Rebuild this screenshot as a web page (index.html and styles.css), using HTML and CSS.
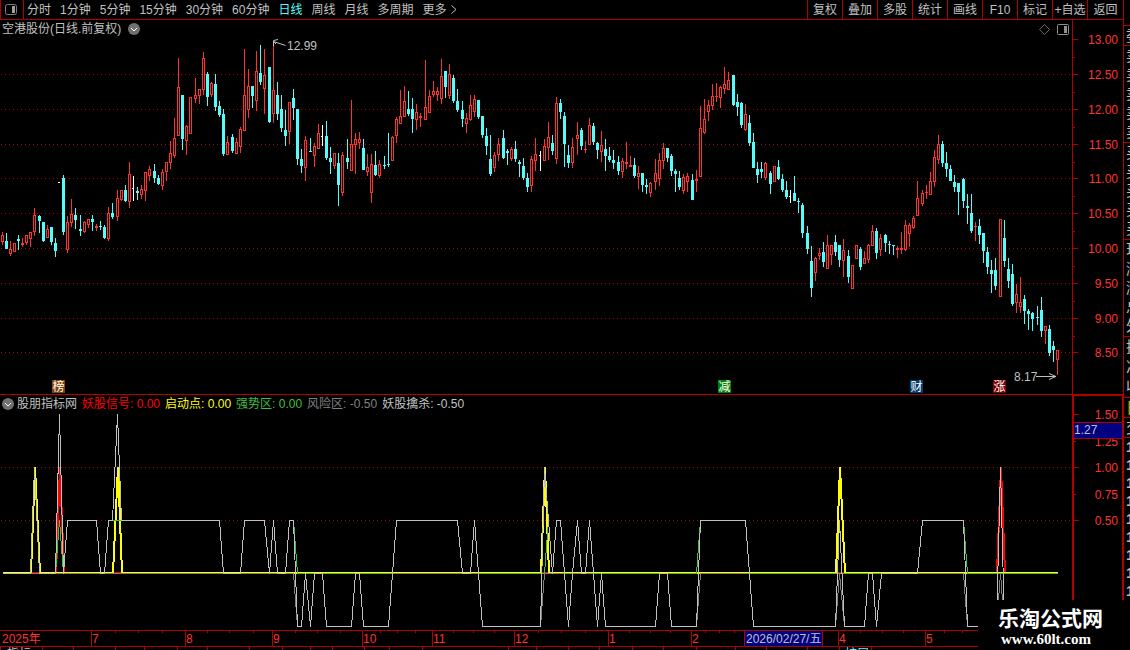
FILE: index.html
```html
<!DOCTYPE html>
<html lang="zh-CN">
<head>
  <meta charset="UTF-8">
  <meta name="viewport" content="width=device-width, initial-scale=1.0">
  <title>空港股份 日线</title>
  <link rel="stylesheet" href="styles.css">
</head>
<body>
  <div class="app">
    <div class="main">
      <!-- 工具栏 -->
      <nav class="toolbar">
        <button class="panel-toggle" aria-label="侧栏">
          <svg width="12" height="11" viewBox="0 0 12 11"><rect x="0.5" y="0.5" width="11" height="10" rx="2" fill="none" stroke="#808080"/><rect x="7" y="2" width="3" height="7" fill="#a0a0a0"/></svg>
        </button>
        <div class="periods">
          <button>分时</button>
          <button>1分钟</button>
          <button>5分钟</button>
          <button>15分钟</button>
          <button>30分钟</button>
          <button>60分钟</button>
          <button class="active">日线</button>
          <button>周线</button>
          <button>月线</button>
          <button>多周期</button>
          <button class="more">更多
            <svg width="6" height="9" viewBox="0 0 6 9"><path d="M0.5 0.5L5 4.5L0.5 8.5" fill="none" stroke="#c0c0c0"/></svg>
          </button>
        </div>
        <div class="actions">
          <button>复权</button>
          <button>叠加</button>
          <button>多股</button>
          <button>统计</button>
          <button>画线</button>
          <button>F10</button>
          <button>标记</button>
          <button>+自选</button>
          <button>返回</button>
        </div>
      </nav>

      <!-- K线图 -->
      <section class="panel price-panel">
        <div class="plot">
          <svg id="priceChart"></svg>
          <div class="plot-head">
            <span>空港股份(日线.前复权)</span>
            <svg width="12" height="12" viewBox="0 0 12 12"><circle cx="6" cy="6" r="6" fill="#707070"/><path d="M3 5L6 8L9 5" fill="none" stroke="#fff"/></svg>
            <div class="plot-tools">
              <svg width="11" height="11" viewBox="0 0 11 11"><path d="M5.5 0.5L10.5 5.5L5.5 10.5L0.5 5.5Z" fill="none" stroke="#808080" stroke-width="0.8"/></svg>
              <svg width="12" height="11" viewBox="0 0 12 11"><rect x="0.5" y="0.5" width="11" height="10" rx="1" fill="none" stroke="#909090"/><rect x="7" y="2" width="3" height="7" fill="#909090"/></svg>
            </div>
          </div>
        </div>
        <svg class="axis" id="priceAxis"></svg>
      </section>

      <!-- 指标 -->
      <section class="panel index-panel">
        <div class="plot">
          <svg id="indexChart"></svg>
          <div class="plot-head">
            <svg width="12" height="12" viewBox="0 0 12 12"><circle cx="6" cy="6" r="6" fill="#707070"/><path d="M3 5L6 8L9 5" fill="none" stroke="#fff"/></svg>
            <span class="index-name">股朋指标网</span>
            <span class="red">妖股信号: 0.00</span>
            <span class="yellow">启动点: 0.00</span>
            <span class="green">强势区: 0.00</span>
            <span class="gray">风险区: -0.50</span>
            <span>妖股擒杀: -0.50</span>
          </div>
        </div>
        <svg class="axis" id="indexAxis"></svg>
      </section>

      <svg class="timeline" id="timeline"></svg>
      <div class="footer">
        <svg id="footTicks"></svg>
        <div class="foot-text"><span>指标</span><span class="cyan">扩展</span></div>
      </div>
    </div>

    <!-- 右侧盘口 -->
    <aside class="side">
      <div class="cells one"><span>委</span></div>
      <div class="cells five"><span>卖</span><span>卖</span><span>卖</span><span>卖</span><span>卖</span></div>
      <div class="cells five"><span>买</span><span>买</span><span>买</span><span>买</span><span>买</span></div>
      <div class="cells five"><span>现</span><span>涨</span><span>涨</span><span>总</span><span>外</span></div>
      <div class="cells three"><span>换</span><span>净</span><span>收</span></div>
      <div class="cells one tab"><span>日</span></div>
      <div class="cells one"><span>交</span></div>
      <div class="cells ticks"><span>1</span><span>1</span><span>1</span><span>1</span><span>1</span><span>1</span><span>1</span><span>1</span><span>1</span></div>
    </aside>

    <div class="watermark">
      <strong>乐淘公式网</strong>
      <b>www.60lt.com</b>
    </div>
  </div>

  <script src="chart.js"></script>
</body>
</html>
```

FILE: styles.css
```css
body {
  margin: 0;
  background-color: #000;
  color: #c0c0c0;
  font-family: "Liberation Sans", "Noto Sans CJK SC", sans-serif;
  font-size: 12px;
  overflow: hidden;
}
.app {
  position: relative;
  display: flex;
  height: 100vh;
}
.main {
  flex: 1;
  min-width: 0;
  display: flex;
  flex-direction: column;
}
svg {
  display: block;
}
button {
  padding: 0;
  border: none;
  background: none;
  color: #c0c0c0;
  font: inherit;
  line-height: 18px;
  white-space: nowrap;
  cursor: pointer;
}

/* 工具栏 */
.toolbar {
  display: flex;
  height: 19px;
  border-bottom: 1px solid #b00000;
}
.panel-toggle {
  width: 24px;
  padding-left: 4px;
  border-left: 1px solid #b00000;
  border-right: 1px solid #b00000;
}
.periods {
  display: flex;
  flex: 1;
  gap: 9px;
  padding-left: 3px;
}
.periods .active {
  color: #54fcfc;
}
.more {
  display: flex;
  align-items: center;
  gap: 4px;
}
.actions {
  display: flex;
}
.actions button {
  width: 35px;
  border-left: 1px solid #b00000;
}
.actions button:last-child {
  width: 36px;
}

/* 图表 */
.panel {
  display: flex;
}
.price-panel {
  height: 374px;
  border-bottom: 1px solid #b00000;
}
.index-panel {
  height: 235px;
}
.plot {
  flex: 1;
  min-width: 0;
  display: grid;
}
.plot > * {
  grid-area: 1 / 1;
}
.plot > svg {
  width: 100%;
  height: 100%;
}
.plot-head {
  display: flex;
  align-self: start;
  align-items: center;
  gap: 5px;
  height: 18px;
  padding: 0 3px 0 2px;
  line-height: 18px;
  white-space: nowrap;
}
.price-panel .plot-head {
  gap: 7px;
}
.plot-tools {
  display: flex;
  gap: 7px;
  margin-left: auto;
}
.axis {
  box-sizing: border-box;
  width: 51px;
  height: 100%;
  border-left: 1px solid #b00000;
}
.index-panel .axis {
  border: solid #b00000;
  border-width: 1px 1px 0 2px;
}
.timeline {
  box-sizing: border-box;
  width: 100%;
  height: 17px;
  border-top: 1px solid #b00000;
  border-bottom: 1px solid #b00000;
}
.footer {
  display: grid;
  height: 3px;
  overflow: hidden;
}
.footer > * {
  grid-area: 1 / 1;
  width: 100%;
}
.foot-text {
  display: flex;
  justify-content: space-between;
  box-sizing: border-box;
  padding: 0 254px 0 7px;
  line-height: 14px;
}
.red { color: #ff0000; }
.yellow { color: #ffff00; }
.green { color: #40c040; }
.gray { color: #808080; }
.cyan { color: #54fcfc; }
.index-panel .plot-head svg {
  margin-right: -2px;
}

/* svg 文字和线 */
text {
  font-family: "Liberation Sans", "Noto Sans CJK SC", sans-serif;
  font-size: 12px;
  fill: #c0c0c0;
}
.scale {
  fill: #ff3232;
}
.tag {
  fill: #fff;
}
.line {
  fill: none;
  shape-rendering: crispEdges;
}

/* 盘口 */
.side {
  width: 6px;
  padding-top: 25px;
  border-left: 1px solid #b00000;
  overflow: hidden;
  font-size: 15px;
}
.cells {
  display: grid;
  box-sizing: border-box;
  grid-auto-rows: 1fr;
  align-items: center;
  padding-left: 2px;
  border-top: 1px solid #b00000;
  line-height: 18px;
}
.one { height: 20px; }
.five { height: 97px; }
.three { height: 61px; }
.ticks {
  height: 163px;
  font-weight: bold;
}
.tab {
  color: #c0c000;
}

.watermark {
  position: absolute;
  right: 0;
  bottom: 0;
  box-sizing: border-box;
  width: 152px;
  height: 50px;
  padding: 8px 0 0 20px;
  background-color: #000;
  color: #fff;
}
.watermark strong {
  display: block;
  font-size: 21px;
  line-height: 22px;
}
.watermark b {
  display: block;
  padding-left: 3px;
  font-family: "Liberation Serif", serif;
  font-size: 15px;
  line-height: 18px;
}
```

FILE: chart.js
```js
const RED = '#ff3232';
const CYAN = '#54fcfc';
const LINE = '#b00000';

// 每根K线: 上影 实体上 实体下 下影 颜色 (r 涨, c 跌, w 平)
const candles = `
232 235 242 245 r,233 241 249 249 c,241 249 254 256 r,243 243 252 252 r,235 239 241 250 c,238 243 245 247 r,
235 235 243 245 r,232 232 239 247 r,208 215 232 236 r,215 216 221 233 c,222 222 241 242 c,225 229 238 238 r,
227 227 242 245 c,238 243 251 257 c,182 182 183 183 w,175 178 232 235 c,216 222 250 253 r,199 214 223 227 r,
208 215 220 229 c,215 229 231 236 c,221 222 232 233 r,219 219 225 228 r,215 219 222 231 c,224 226 228 231 r,
221 226 227 230 c,225 227 238 239 c,207 213 239 241 r,203 213 217 219 c,190 198 217 221 r,190 190 200 201 r,
185 190 201 202 c,162 174 202 208 r,176 188 189 201 w,187 191 193 200 c,185 189 195 199 r,172 172 191 201 r,
166 169 176 181 r,164 171 178 183 c,175 178 184 185 c,169 172 186 190 r,162 162 172 181 r,141 153 163 169 r,
118 138 156 158 r,58 87 136 136 r,95 95 139 150 c,125 126 141 155 r,97 97 134 134 r,78 95 99 103 r,
89 89 96 104 r,52 58 90 95 r,72 74 97 106 c,82 83 95 97 r,74 84 107 111 c,101 106 115 117 c,
109 114 154 156 c,136 142 155 155 r,134 137 151 153 c,138 142 154 154 r,127 129 147 153 r,49 95 131 131 r,
69 86 110 118 r,86 86 96 108 c,51 71 101 111 r,45 73 82 85 c,49 75 89 114 r,67 67 122 123 c,
42 90 114 123 r,82 95 114 120 c,95 109 128 132 c,110 130 136 146 c,102 102 132 144 r,89 98 108 120 c,
109 109 159 165 c,149 159 166 173 c,136 140 168 181 r,138 151 152 152 c,143 146 156 167 r,124 133 149 149 r,
125 136 137 146 w,121 136 158 160 c,147 158 162 174 c,153 153 166 169 r,153 163 185 206 c,152 155 193 196 r,
139 158 162 169 c,100 144 171 171 r,133 139 145 174 r,132 139 143 149 r,139 148 170 170 c,154 167 172 176 r,
154 164 193 203 r,151 165 175 176 c,160 164 176 178 r,156 165 166 169 c,133 164 165 167 c,136 137 161 161 r,
117 119 136 143 r,90 116 124 124 r,86 101 117 117 r,91 109 114 116 c,98 109 119 133 c,104 112 120 130 r,
113 116 118 127 r,60 107 120 120 r,90 96 113 113 r,81 91 95 97 r,87 91 95 101 r,59 76 99 104 r,
71 71 87 98 c,64 74 96 99 r,75 78 101 103 c,89 101 110 112 c,101 110 119 127 c,113 118 124 133 r,
95 105 120 121 r,95 99 112 117 r,100 100 117 119 c,116 116 135 138 c,128 136 146 155 c,135 159 174 176 c,
152 155 168 172 r,138 144 155 161 r,130 138 158 159 c,149 151 153 165 c,147 149 159 161 r,141 149 159 162 c,
160 162 164 177 c,158 166 178 180 c,173 178 187 192 c,156 159 186 192 r,138 154 161 171 r,151 155 156 171 w,
139 146 161 161 r,122 137 148 160 r,135 143 151 155 c,97 103 159 164 r,99 103 112 119 c,112 116 144 167 c,
145 155 163 168 c,138 147 163 168 r,122 135 139 155 r,128 130 146 150 c,141 149 150 153 r,118 125 145 145 r,
123 126 142 145 c,142 143 150 159 c,131 145 152 162 r,139 149 156 171 c,147 156 160 162 c,150 160 163 169 c,
156 162 171 175 c,158 161 172 178 r,142 162 164 169 r,156 165 167 167 r,158 165 176 178 c,166 173 177 189 r,
173 173 185 192 c,179 185 187 194 c,182 183 193 197 r,159 173 182 190 r,153 160 179 186 r,143 148 161 169 r,
148 148 158 162 c,154 156 171 176 c,169 171 174 192 c,171 178 187 190 c,174 177 191 194 r,173 176 182 192 r,
174 180 200 200 c,170 179 181 192 r,106 128 177 177 r,99 119 133 134 r,100 105 112 121 r,84 96 106 110 r,
83 96 97 102 r,86 87 98 108 r,67 84 89 94 r,72 80 90 90 r,75 75 105 106 c,94 102 107 116 c,
102 103 125 128 c,104 114 130 131 r,115 123 143 146 c,133 142 168 168 c,162 169 175 183 c,162 169 172 178 c,
162 163 178 180 r,171 173 184 194 c,166 166 182 182 r,160 167 179 180 c,174 179 190 192 c,181 190 197 199 c,
190 196 197 203 w,176 193 201 201 c,198 201 202 213 c,203 205 233 238 c,226 233 249 254 c,246 261 288 297 c,
257 258 273 281 r,248 253 256 260 r,242 252 262 267 c,235 245 269 269 r,245 245 255 265 r,235 242 252 256 c,
245 245 260 267 c,239 250 261 277 r,250 256 277 283 c,265 265 289 289 r,245 245 259 259 r,247 249 267 270 c,
251 258 264 264 r,244 245 260 263 r,225 231 246 246 r,228 231 253 259 c,234 238 250 256 r,234 235 243 252 c,
241 244 245 254 c,245 245 246 255 c,246 248 250 258 r,232 248 250 254 r,220 225 250 251 r,223 225 234 247 r,
216 218 228 229 r,181 198 216 216 r,190 193 204 206 r,185 192 193 199 r,172 181 195 195 r,150 157 182 187 r,
135 144 160 164 r,141 144 163 167 c,152 163 169 177 c,165 169 181 181 c,175 182 187 192 c,183 183 192 215 c,
178 179 201 208 c,194 206 208 224 c,194 213 231 233 c,222 226 227 241 r,219 226 235 244 c,233 233 251 263 c,
247 252 267 274 c,260 270 274 293 c,258 270 286 290 c,219 219 297 297 r,220 238 261 267 c,258 269 281 288 c,
264 274 304 306 c,284 294 303 313 r,277 302 307 313 r,295 299 311 324 c,309 311 314 330 c,312 313 319 331 c,
306 317 318 325 c,297 310 331 337 c,326 326 331 344 r,325 329 353 356 c,341 346 350 362 c,350 350 360 375 r`
  .trim().split(',').map(row => row.trim().split(' '));

const rect = (x, y, w, h, fill) => `<rect x="${x}" y="${y}" width="${w}" height="${h}" fill="${fill}"/>`;
const text = (x, y, s, cls = '', anchor = 'start') => `<text x="${x}" y="${y}" class="${cls}" text-anchor="${anchor}">${s}</text>`;
const dots = y => `<line x1="1" x2="100%" y1="${y + 0.5}" y2="${y + 0.5}" stroke="${LINE}" stroke-dasharray="1 3"/>`;

// K线
const drawCandle = ([high, top, bottom, low, type], i) => {
  [high, top, bottom, low] = [high, top, bottom, low].map(Number);
  const x = Math.floor(2.05 + i * 4.107);
  if (type === 'w') {
    return rect(x, high, 1, low - high, '#fff') + rect(x - 1, top, 2, 1, '#fff');
  }
  const color = type === 'r' ? RED : CYAN;
  let out = rect(x, high, 1, low - high, color) + rect(x - 1, top, 3, bottom - top, color);
  if (type === 'r' && bottom - top > 2) {
    out += rect(x, top + 1, 1, bottom - top - 2, '#000');
  }
  return out;
};

const prices = [['13.00', 39], ['12.50', 74], ['12.00', 109], ['11.50', 144], ['11.00', 178], ['10.50', 213], ['10.00', 248], ['9.50', 283], ['9.00', 318], ['8.50', 352]];
const tags = [['榜', 52, '#804000'], ['减', 718, '#008000'], ['财', 910, '#003c70'], ['涨', 993, '#800000']];

document.getElementById('priceChart').innerHTML = `<g transform="translate(0,-20)">
  ${prices.slice(1).map(p => dots(p[1])).join('')}
  ${candles.map(drawCandle).join('')}
  <path d="M285.5 45.5L273.5 41.5M278 39.5L273.5 40.5V46M273.5 41.5L276 44" fill="none" stroke="#c0c0c0"/>
  ${text(287, 50, '12.99')}
  ${text(1014, 381, '8.17')}
  <path d="M1036 376.5H1056M1049 373.5L1056 376.5L1049 379.5" fill="none" stroke="#c0c0c0"/>
  ${tags.map(([s, x, bg]) => rect(x, 380, 13, 13, bg) + text(x + 0.5, 391, s, 'tag')).join('')}
</g>`;

document.getElementById('priceAxis').innerHTML = `<g transform="translate(0,-20)">
  ${prices.map(([s, y], i) => rect(0, y, 5, 1, LINE) + text(45, y + 5, s, 'scale', 'end') + (i < 9 ? rect(0, y + 18, 2, 1, LINE) : '')).join('')}
</g>`;

// 指标线, [x, 值]
const hunt = [[2, 0], [30, 0], [34, 1], [39, 0], [55, 0], [59, 1.5], [63, 0], [67, .5], [96, .5], [100, 0], [104, 0], [108, .5], [112, .5],
  [117, 1.5], [121, .5], [219, .5], [223, 0], [240, 0], [244, .5], [264, .5], [269, 0], [273, .5], [277, 0], [285, 0], [289, .5], [293, .5],
  [297, -.5], [301, -.5], [305, 0], [310, -.5], [314, 0], [322, 0], [326, -.5], [351, -.5], [355, 0], [359, 0], [363, -.5], [388, -.5],
  [392, 0], [396, .5], [457, .5], [462, 0], [470, 0], [474, .5], [478, 0], [482, -.5], [540, -.5], [544, 1], [548, .5], [552, 0], [556, .5],
  [560, .5], [564, 0], [568, -.5], [572, 0], [577, .5], [581, 0], [585, 0], [589, .5], [593, 0], [597, -.5], [601, 0], [605, -.5],
  [655, -.5], [659, 0], [667, 0], [671, -.5], [696, -.5], [700, .5], [745, .5], [749, 0], [753, -.5], [835, -.5], [839, .5], [844, -.5],
  [864, -.5], [868, 0], [872, 0], [876, -.5], [881, 0], [917, 0], [922, .5], [963, .5], [967, -.5], [996, -.5], [1000, 1], [1004, -.5], [1057, -.5]];
const signal = [[2, 0], [55, 0], [59, 1], [63, 0], [996, 0], [1000, 1], [1004, 0], [1057, 0]];
const start = [[2, 0], [30, 0], [34, 1], [39, 0], [112, 0], [117, 1], [121, 0], [540, 0], [544, 1], [548, 0], [835, 0], [839, 1], [844, 0], [1057, 0]];
const noStrong = [34, 544, 839, 1000];
const strong = hunt.map(([x, v]) => [x, noStrong.includes(x) ? 0 : Math.min(.5, Math.max(0, v))]);
const risk = hunt.map(([x, v]) => [x, Math.min(0, v)]);

// 粗线占 x 和 x+1 两列
const polyline = (data, color, width) => {
  const dx = width / 2;
  const dy = width === 1 ? 0.5 : 0;
  const points = data.map(([x, v]) => `${x + dx},${573 - v * 106 + dy}`).join(' ');
  return `<polyline class="line" points="${points}" stroke="${color}" stroke-width="${width}" stroke-linejoin="bevel"/>`;
};

document.getElementById('indexChart').innerHTML = `<g transform="translate(0,-395)">
  ${dots(467)}${dots(520)}
  ${polyline(signal, '#ff0000', 2)}
  ${polyline(start, '#ffff00', 2)}
  ${polyline(strong, '#40c040', 1)}
  ${polyline(risk, '#808080', 1)}
  ${polyline(hunt, '#c0c0c0', 1)}
</g>`;

const levels = [['1.50', 414, 5], ['1.25', 441, 2], ['1.00', 467, 5], ['0.75', 494, 2], ['0.50', 520, 5]];
document.getElementById('indexAxis').innerHTML = `<g transform="translate(-1,-396)">
  ${levels.map(([s, y, w]) => rect(1, y, w, 1, LINE) + text(45, y + 5, s, 'scale', 'end')).join('')}
  ${rect(0, 422, 51, 17, LINE)}${rect(1, 423, 50, 15, '#000080')}
  ${text(1, 434, '1.27')}
</g>`;

// 时间轴
const months = [['2025年', 1], ['7', 91], ['8', 185], ['9', 272], ['10', 362], ['11', 432], ['12', 514], ['1', 608], ['2', 691], ['', 744], ['4', 838], ['5', 925]];
const weeks = [115, 138, 162, 207, 229, 253, 295, 317, 340, 380, 397, 415, 453, 473, 494, 538, 561, 585, 629, 650, 670, 705, 719, 734, 860, 882, 903, 944, 962];
document.getElementById('timeline').innerHTML =
  weeks.map(x => rect(x, 0, 1, 2, LINE)).join('') +
  months.map(([s, x], i) => (i ? rect(x, 0, 1, 15, LINE) : '') + text(x + 1, 12, s, 'scale')).join('') +
  rect(745, 0, 77, 15, '#000080') + rect(822, 0, 1, 15, LINE) + text(746, 12, '2026/02/27/五');

const foot = [0, 42, 73, 115, 144, 177, 207, 249, 282, 310, 332, 364, 389, 422, 508, 536, 568, 599, 632, 663, 696, 735, 766, 807, 839, 871];
document.getElementById('footTicks').innerHTML = foot.map(x => rect(x, 0, 1, 3, LINE)).join('');
```
